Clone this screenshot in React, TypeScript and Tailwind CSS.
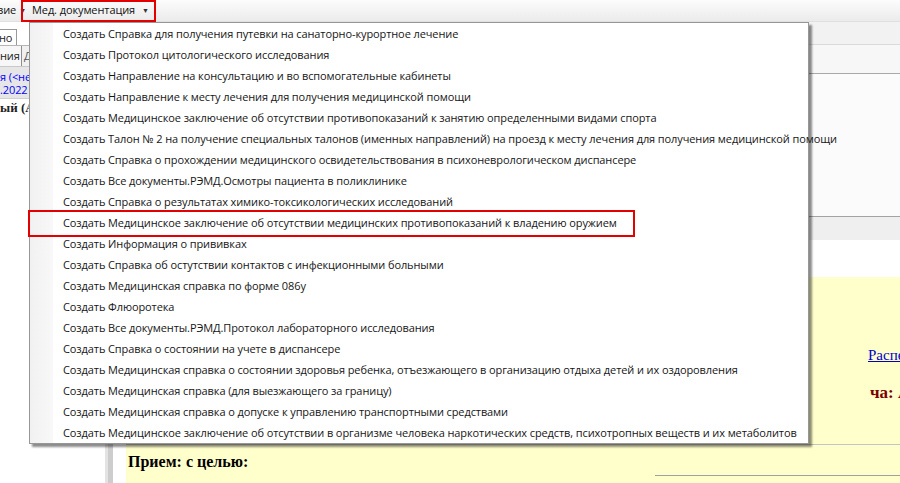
import React from 'react';

const items: string[] = [
  'Создать Справка для получения путевки на санаторно-курортное лечение',
  'Создать Протокол цитологического исследования',
  'Создать Направление на консультацию и во вспомогательные кабинеты',
  'Создать Направление к месту лечения для получения медицинской помощи',
  'Создать Медицинское заключение об отсутствии противопоказаний к занятию определенными видами спорта',
  'Создать Талон № 2 на получение специальных талонов (именных направлений) на проезд к месту лечения для получения медицинской помощи',
  'Создать Справка о прохождении медицинского освидетельствования в психоневрологическом диспансере',
  'Создать Все документы.РЭМД.Осмотры пациента в поликлинике',
  'Создать Справка о результатах химико-токсикологических исследований',
  'Создать Медицинское заключение об отсутствии медицинских противопоказаний к владению оружием',
  'Создать Информация о прививках',
  'Создать Справка об остутствии контактов с инфекционными больными',
  'Создать Медицинская справка по форме 086у',
  'Создать Флюоротека',
  'Создать Все документы.РЭМД.Протокол лабораторного исследования',
  'Создать Справка о состоянии на учете в диспансере',
  'Создать Медицинская справка о состоянии здоровья ребенка, отъезжающего в организацию отдыха детей и их оздоровления',
  'Создать Медицинская справка (для выезжающего за границу)',
  'Создать Медицинская справка о допуске к управлению транспортными средствами',
  'Создать Медицинское заключение об отсутствии в организме человека наркотических средств, психотропных веществ и их метаболитов',
];

const ui = "font-['Open_Sans','Noto_Sans',sans-serif]";
const serif = "font-['Liberation_Serif','DejaVu_Serif',serif]";

const Caret = ({ gap }: { gap: string }) => (
  <span className={`${gap} inline-block text-[7px] leading-none text-[#333]`}>▼</span>
);

const LeftPanel = () => (
  <div className={`w-[105px] shrink-0 flex flex-col bg-white text-[11px] tracking-[-0.1px] text-[#222] ${ui}`}>
    <div className="h-[7px]" />
    <div className="h-[16px] flex">
      <div className="w-[18px] border-r border-t border-[#9a9a9a] bg-white leading-[15px] -ml-[1px] overflow-hidden whitespace-nowrap">но</div>
    </div>
    <div className="h-[21px] flex border-t border-[#b5b5b5] bg-[#f0f0f0]">
      <div className="w-[22px] border-r border-[#8e8e8e] bg-[#f7f7f7] leading-[20px] overflow-hidden whitespace-nowrap">ния</div>
      <div className="pl-[2px] leading-[20px] text-[#555]">Д</div>
    </div>
    <div className="h-[32px] bg-[#e6e6e6] border-t border-[#c8c8c8] text-[#0000ff] leading-[13px] pt-[3px] overflow-hidden">
      <div className="whitespace-nowrap">я (&lt;не</div>
      <div>.2022</div>
    </div>
    <div className={`h-[20px] border-t border-[#d0d0d0] ${serif} font-bold text-[13px] tracking-normal leading-[18px] whitespace-nowrap`}>ый (А</div>
    <div className="flex-1" />
  </div>
);

const MainArea = () => (
  <div className="flex-1 flex flex-col">
    <div className="h-[23px] bg-[#f2f2f2] border-b border-[#dadada]" />
    <div className="h-[29px] bg-[#f7f7f7] border-b border-[#a9a9a9]" />
    <div className="h-[143px] bg-[#fbfbfb] border-b border-[#a3a3a3]" />
    <div className="h-[23px] bg-[#efefef]" />
    <div className="flex-1 flex">
      <div className="w-[21px] flex shrink-0">
        <div className="w-[3px] bg-[#e3e3e3]" />
        <div className="w-[5px] bg-[#cdcdcd]" />
        <div className="flex-1 bg-white" />
      </div>
      <div className="flex-1 flex flex-col">
        <div className="h-[37px] bg-white" />
        <div className={`flex-1 bg-[#ffffcc] relative ${serif}`}>
          <div className="h-[71px]" />
          <div className="pl-[742px] text-[15px] text-[#0000cc] underline whitespace-nowrap h-[14px] leading-[14px]">Распе</div>
          <div className="h-[22px]" />
          <div className="pl-[744px] text-[17px] font-bold text-[#7a0000] whitespace-nowrap leading-[18px]">ча: А</div>
          <div className="h-[43px] border-b border-[#c4c4c4]" />
          <div className="h-[8px]" />
          <div className="pl-[2px] text-[16px] font-bold text-black leading-[18px]">Прием: с целью:</div>
          <div className="absolute left-[529px] right-0 top-[198px] border-t border-[#a0a0a0]" />
        </div>
      </div>
    </div>
  </div>
);

const DropMenu = () => (
  <div className="absolute left-[29px] top-[22px] w-[780px] border border-[#979797] bg-white shadow-[3px_3px_2px_rgba(0,0,0,0.45)]">
    <div className="flex">
      <div className="w-[24px] shrink-0 bg-gradient-to-r from-[#f1f1f1] to-[#f8f8f8] border-r border-[#ffffff]" />
      <div className={`flex-1 flex flex-col text-[11px] tracking-[-0.1px] text-[#161616] ${ui}`}>
        {items.map((t, i) => (
          <div key={i} className="h-[21px] pl-[9px] leading-[21px] whitespace-nowrap">
            {t}
          </div>
        ))}
      </div>
    </div>
    <div className="absolute -left-[2px] top-[187px] w-[607px] h-[27px] border-2 border-[#e30000]" />
  </div>
);

export default function App() {
  return (
    <div className={`relative w-[900px] h-[483px] overflow-hidden bg-white ${ui}`}>
      <div className="h-[22px] flex items-center bg-gradient-to-b from-[#fcfcfc] to-[#ebebeb] border-b border-[#e0e0e0] text-[11px] tracking-[-0.1px] text-[#111]">
        <div className="flex items-center -ml-[3px] whitespace-nowrap">
          вие<Caret gap="ml-[3px]" />
        </div>
        <div className="-ml-[5px] h-[22px] flex items-center pl-[9px] pr-[5px] border-2 border-[#e30000] whitespace-nowrap">
          Мед. документация<Caret gap="ml-[7px]" />
        </div>
      </div>
      <div className="flex h-[461px]">
        <LeftPanel />
        <MainArea />
      </div>
      <DropMenu />
    </div>
  );
}
